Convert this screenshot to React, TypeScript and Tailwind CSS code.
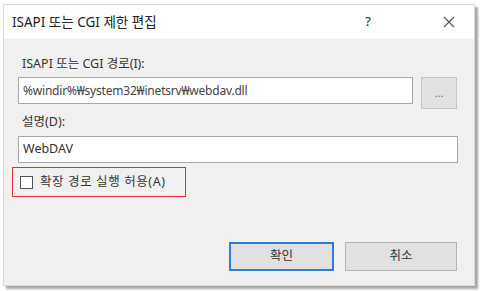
export default function App() {
  const font = { fontFamily: '"Noto Sans", "Noto Sans CJK KR", sans-serif' }
  return (
    <div className="w-[480px] h-[291px] bg-white pt-[4px] pl-[3px]" style={font}>
      <div className="w-[472px] h-[282px] flex flex-col bg-[#f0f0f0] border border-[#d9d9d9] shadow-[3px_3px_2px_rgba(0,0,0,0.35)]">
        {/* Title bar */}
        <div className="h-[34px] bg-white flex items-center pl-[8px] text-[13.5px] text-[#222]">
          <span>ISAPI 또는 CGI 제한 편집</span>
          <span className="ml-auto mr-[72px] text-[13px]">?</span>
          <svg width="12" height="12" viewBox="0 0 12 12" className="mr-[19px]">
            <path d="M1 1L11 11M11 1L1 11" stroke="#555" strokeWidth="1.2" />
          </svg>
        </div>

        {/* Body */}
        <div className="flex-1 flex flex-col pl-[14px] pr-[17px] pt-[15px] text-[12.5px] text-[#333]">
          <div className="leading-[20px] pl-[4px]">ISAPI 또는 CGI 경로(I):</div>
          <div className="flex items-start gap-[8px] mt-[3px]">
            <div className="w-[396px] h-[27px] bg-white border border-[#a8a8a8] flex items-center pl-[4px] text-[12px] tracking-[-0.2px] text-[#444]">
              %windir%₩system32₩inetsrv₩webdav.dll
            </div>
            <div className="w-[36px] h-[32px] bg-[#e1e1e1] border border-[#c4c4c4] flex items-center justify-center text-[#777] text-[11px]">
              ...
            </div>
          </div>
          <div className="leading-[20px] pl-[4px] mt-[3px]">설명(D):</div>
          <div className="w-[440px] h-[27px] bg-white border border-[#a8a8a8] flex items-center pl-[4px] mt-[4px]">
            WebDAV
          </div>
          <div className="w-[174px] h-[30px] border-[1.5px] border-[#e0303c] flex items-center gap-[7px] pl-[7px] mt-[4px] ml-[-6px]">
            <div className="w-[13px] h-[13px] bg-white border border-[#555]" />
            <span className="tracking-[0.6px]">확장 경로 실행 허용(A)</span>
          </div>
          <div className="flex justify-end gap-[11px] mt-[45px]">
            <div className="w-[105px] h-[29px] bg-[#e1e1e1] border-2 border-[#2b7fd6] flex items-center justify-center">확인</div>
            <div className="w-[112px] h-[29px] bg-[#e1e1e1] border border-[#b4b4b4] flex items-center justify-center">취소</div>
          </div>
        </div>
      </div>
    </div>
  )
}
